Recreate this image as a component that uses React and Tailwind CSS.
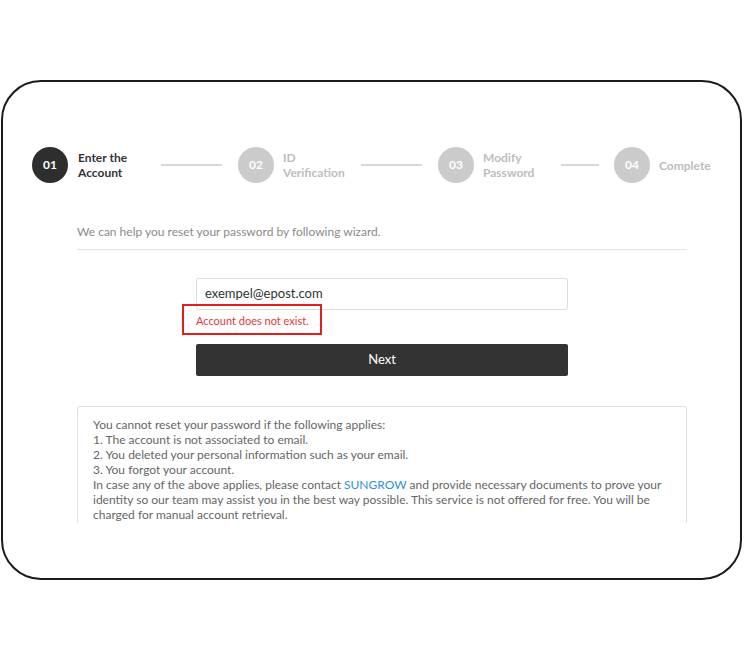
const steps = [
  { n: "01", lines: ["Enter the", "Account"], active: true },
  { n: "02", lines: ["ID", "Verification"] },
  { n: "03", lines: ["Modify", "Password"] },
  { n: "04", lines: ["Complete"] },
]

const Step = ({ step, labelW }) => (
  <div className="flex items-center">
    <div
      className={`w-[36px] h-[36px] rounded-full flex items-center justify-center text-[12px] font-bold text-white ${
        step.active ? "bg-[#2e2e2e]" : "bg-[#cbcbcb]"
      }`}
    >
      {step.n}
    </div>
    <div
      className={`text-[12px] font-bold leading-[15px] ${labelW} ${
        step.active ? "ml-[10px] text-[#333]" : "ml-[9px] text-[#bdbdbd]"
      }`}
    >
      {step.lines.map((l) => (
        <div key={l}>{l}</div>
      ))}
    </div>
  </div>
)

const App = () => {
  return (
    <div className="w-[744px] h-[660px] bg-white pt-[80px] pl-[1px] font-['Lato','Open_Sans',sans-serif]">
      <div className="w-[741px] h-[500px] border-2 border-[#1a1a1a] rounded-[40px] overflow-hidden">
        {/* wizard steps */}
        <div className="flex items-center mt-[65px] ml-[29px]">
          <Step step={steps[0]} labelW="w-[83px]" />
          <div className="w-[61px] h-[2px] bg-[#d6d6d6]" />
          <div className="ml-[16px]">
            <Step step={steps[1]} labelW="w-[78px]" />
          </div>
          <div className="w-[61px] h-[2px] bg-[#d6d6d6]" />
          <div className="ml-[16px]">
            <Step step={steps[2]} labelW="w-[78px]" />
          </div>
          <div className="w-[38px] h-[2px] bg-[#d6d6d6]" />
          <div className="ml-[15px]">
            <Step step={steps[3]} labelW="w-[70px]" />
          </div>
        </div>

        <div className="ml-[74px] w-[610px]">
          <p className="mt-[41px] text-[12px] leading-[16px] text-[#8a8a8a]">
            We can help you reset your password by following wizard.
          </p>
          <div className="mt-[9px] h-[1px] bg-[#e3e3e3]" />

          <div className="w-[372px] mx-auto mt-[28px]">
            <div className="h-[32px] border border-[#dedede] rounded-[2px] flex items-center px-[8px] text-[13px] text-[#333]">
              exempel@epost.com
            </div>
            <div className="relative mt-[2px] h-[18px] text-[11px] leading-[18px] text-[#e4393c]">
              Account does not exist.
              <div className="absolute left-[-14px] top-[-8px] w-[140px] h-[31px] border-2 border-[#e0201f]" />
            </div>
            <button className="mt-[14px] w-full h-[32px] bg-[#333] rounded-[2px] text-white text-[13px]">
              Next
            </button>
          </div>

          <div className="mt-[30px] h-[117px] border border-b-0 border-[#e0e0e0] rounded-t-[3px] px-[15px] pt-[10px] text-[12px] leading-[15px] text-[#666] overflow-hidden">
            <p>You cannot reset your password if the following applies:</p>
            <p>1. The account is not associated to email.</p>
            <p>2. You deleted your personal information such as your email.</p>
            <p>3. You forgot your account.</p>
            <p>
              In case any of the above applies, please contact <span className="text-[#2f8fe0]">SUNGROW</span> and
              provide necessary documents to prove your identity so our team may assist you in the best way possible.
              This service is not offered for free. You will be charged for manual account retrieval.
            </p>
          </div>
        </div>
      </div>
    </div>
  )
}

export default App
